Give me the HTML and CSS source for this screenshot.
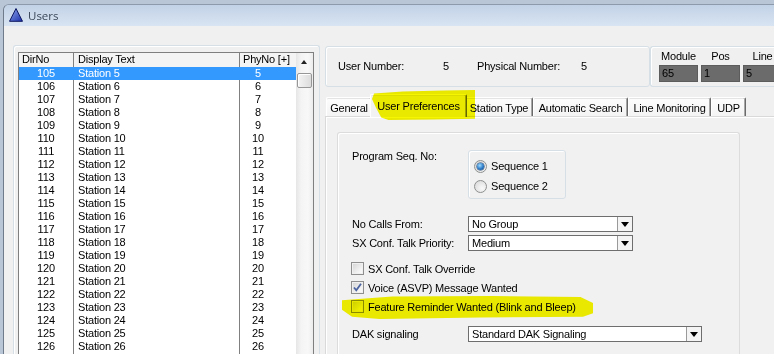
FILE: index.html
```html
<!DOCTYPE html>
<html lang="en">
<head>
    <meta charset="UTF-8">
    <title>Users</title>
    <link rel="stylesheet" href="styles.css">
</head>
<body>
    <div class="window">
        <div class="titlebar">
            <svg class="app-icon" width="14" height="14" viewBox="0 0 14 14">
                <defs>
                    <linearGradient id="tri" x1="0" y1="0" x2="1" y2="1">
                        <stop offset="0" stop-color="#8fa8f0"/>
                        <stop offset="1" stop-color="#1b2fa8"/>
                    </linearGradient>
                </defs>
                <polygon points="7,0.5 13.5,13.3 0.5,13.3" fill="url(#tri)" stroke="#0d1760" stroke-width="1"/>
            </svg>
            <span class="title">Users</span>
        </div>

        <div class="client">
            <div class="list-group">
                <div class="listbox">
                    <div class="list-main">
                        <div class="list-head">
                            <div class="c1">DirNo</div>
                            <div class="c2">Display Text</div>
                            <div class="c3">PhyNo [+]</div>
                        </div>
                        <div class="rows">
                            <div class="row selected"><div class="c1">105</div><div class="c2">Station 5</div><div class="c3">5</div></div>
                            <div class="row"><div class="c1">106</div><div class="c2">Station 6</div><div class="c3">6</div></div>
                            <div class="row"><div class="c1">107</div><div class="c2">Station 7</div><div class="c3">7</div></div>
                            <div class="row"><div class="c1">108</div><div class="c2">Station 8</div><div class="c3">8</div></div>
                            <div class="row"><div class="c1">109</div><div class="c2">Station 9</div><div class="c3">9</div></div>
                            <div class="row"><div class="c1">110</div><div class="c2">Station 10</div><div class="c3">10</div></div>
                            <div class="row"><div class="c1">111</div><div class="c2">Station 11</div><div class="c3">11</div></div>
                            <div class="row"><div class="c1">112</div><div class="c2">Station 12</div><div class="c3">12</div></div>
                            <div class="row"><div class="c1">113</div><div class="c2">Station 13</div><div class="c3">13</div></div>
                            <div class="row"><div class="c1">114</div><div class="c2">Station 14</div><div class="c3">14</div></div>
                            <div class="row"><div class="c1">115</div><div class="c2">Station 15</div><div class="c3">15</div></div>
                            <div class="row"><div class="c1">116</div><div class="c2">Station 16</div><div class="c3">16</div></div>
                            <div class="row"><div class="c1">117</div><div class="c2">Station 17</div><div class="c3">17</div></div>
                            <div class="row"><div class="c1">118</div><div class="c2">Station 18</div><div class="c3">18</div></div>
                            <div class="row"><div class="c1">119</div><div class="c2">Station 19</div><div class="c3">19</div></div>
                            <div class="row"><div class="c1">120</div><div class="c2">Station 20</div><div class="c3">20</div></div>
                            <div class="row"><div class="c1">121</div><div class="c2">Station 21</div><div class="c3">21</div></div>
                            <div class="row"><div class="c1">122</div><div class="c2">Station 22</div><div class="c3">22</div></div>
                            <div class="row"><div class="c1">123</div><div class="c2">Station 23</div><div class="c3">23</div></div>
                            <div class="row"><div class="c1">124</div><div class="c2">Station 24</div><div class="c3">24</div></div>
                            <div class="row"><div class="c1">125</div><div class="c2">Station 25</div><div class="c3">25</div></div>
                            <div class="row"><div class="c1">126</div><div class="c2">Station 26</div><div class="c3">26</div></div>
                            <div class="row empty"><div class="c1"></div><div class="c2"></div><div class="c3"></div></div>
                        </div>
                    </div>
                    <div class="scrollbar">
                        <div class="sb-up"></div>
                        <div class="sb-thumb"></div>
                    </div>
                </div>
            </div>

            <div class="right">
                <div class="info-row">
                    <div class="info-panel">
                        <span class="info-label">User Number:</span>
                        <span class="info-value">5</span>
                        <span class="info-label wide">Physical Number:</span>
                        <span class="info-value">5</span>
                    </div>
                    <div class="module-panel">
                        <div class="mod-col">
                            <div class="mod-label">Module</div>
                            <div class="mod-box">65</div>
                        </div>
                        <div class="mod-col">
                            <div class="mod-label">Pos</div>
                            <div class="mod-box">1</div>
                        </div>
                        <div class="mod-col">
                            <div class="mod-label">Line</div>
                            <div class="mod-box">5</div>
                        </div>
                    </div>
                </div>

                <div class="tabs">
                    <div class="tab tab-general">General</div>
                    <div class="tab tab-prefs active marked">User Preferences</div>
                    <div class="tab tab-station">Station Type</div>
                    <div class="tab tab-search">Automatic Search</div>
                    <div class="tab tab-monitor">Line Monitoring</div>
                    <div class="tab tab-udp">UDP</div>
                </div>

                <div class="tab-page">
                    <div class="groupbox">
                        <div class="form-row top">
                            <div class="form-label">Program Seq. No:</div>
                            <div class="radio-box">
                                <div class="radio-row"><span class="radio checked"></span>Sequence 1</div>
                                <div class="radio-row"><span class="radio"></span>Sequence 2</div>
                            </div>
                        </div>

                        <div class="form-row select-row first">
                            <div class="form-label">No Calls From:</div>
                            <div class="combo"><span class="combo-text">No Group</span><span class="combo-btn"></span></div>
                        </div>
                        <div class="form-row select-row">
                            <div class="form-label">SX Conf. Talk Priority:</div>
                            <div class="combo"><span class="combo-text">Medium</span><span class="combo-btn"></span></div>
                        </div>

                        <div class="checks">
                            <div class="check-row"><span class="checkbox"></span>SX Conf. Talk Override</div>
                            <div class="check-row">
                                <span class="checkbox">
                                    <svg width="11" height="11" viewBox="0 0 11 11"><path d="M2 5.5 L4.3 8.3 L9 1.8" fill="none" stroke="#4c64a0" stroke-width="1.8"/></svg>
                                </span>Voice (ASVP) Message Wanted
                            </div>
                            <div class="check-row marked"><span class="checkbox"></span>Feature Reminder Wanted (Blink and Bleep)</div>
                        </div>

                        <div class="form-row select-row dak">
                            <div class="form-label">DAK signaling</div>
                            <div class="combo long"><span class="combo-text">Standard DAK Signaling</span><span class="combo-btn"></span></div>
                        </div>
                    </div>
                </div>
            </div>
        </div>
    </div>
</body>
</html>
```

FILE: styles.css
```css
* {
    margin: 0;
    padding: 0;
    box-sizing: border-box;
}

body {
    width: 774px;
    height: 354px;
    overflow: hidden;
    background: #b9c6d6;
    font-family: "Liberation Sans", Arial, sans-serif;
    font-size: 11px;
    letter-spacing: -0.2px;
    color: #000;
}

.window {
    margin: 4px 0 0 3px;
    height: 350px;
    border-left: 1px solid #6f7b8b;
    border-top: 1px solid #8d9aab;
    border-top-left-radius: 6px;
    display: flex;
    flex-direction: column;
    overflow: hidden;
}

/* title bar */
.titlebar {
    height: 21px;
    flex-shrink: 0;
    background: linear-gradient(#c2d2e6, #d8e4f2);
    display: flex;
    align-items: center;
    gap: 5px;
    padding: 0 0 1px 5px;
}

.title {
    font-family: "Open Sans", "Liberation Sans", sans-serif;
    font-size: 11.5px;
    letter-spacing: 0;
    color: #3a475a;
}

.client {
    flex: 1;
    background: #f0f0f0;
    display: flex;
    align-items: flex-start;
}

/* left list */
.list-group {
    margin: 19px 0 0 9px;
    width: 307px;
    height: 340px;
    border: 1px solid #d5dfe5;
    border-bottom: none;
    border-radius: 3px 3px 0 0;
    box-shadow: inset 1px 1px 0 #fff;
    padding: 6px 5px 0 4px;
}

.listbox {
    display: flex;
    height: 330px;
    background: #fff;
    border: 1px solid #7f7f7f;
    border-bottom: none;
}

.list-main {
    width: 277px;
}

.list-head {
    display: flex;
    height: 14px;
    line-height: 13px;
    background: #f4f4f4;
}

.list-head > div {
    padding-left: 3px;
}

.list-head .c2 {
    padding-left: 4px;
}

.c1 {
    width: 55px;
    border-right: 1px solid #808080;
}

.c2 {
    width: 166px;
    border-right: 1px solid #808080;
}

.c3 {
    width: 56px;
}

.row {
    display: flex;
    height: 13px;
    line-height: 13px;
}

.row .c1 {
    text-align: center;
}

.row .c2 {
    padding-left: 4px;
}

.row .c3 {
    text-align: center;
    padding-right: 20px;
}

.row.selected {
    background: #3399ff;
    color: #fff;
}

.row.selected .c1,
.row.selected .c2 {
    border-right-color: #3399ff;
}

.scrollbar {
    width: 17px;
    background: linear-gradient(90deg, #e6e6e6, #f4f4f4 30%, #f8f8f8 70%, #ececec);
    display: flex;
    flex-direction: column;
    align-items: center;
}

.sb-up {
    width: 100%;
    height: 20px;
    position: relative;
}

.sb-up::after {
    content: '';
    position: absolute;
    left: 5px;
    top: 7px;
    border-left: 3.5px solid transparent;
    border-right: 3.5px solid transparent;
    border-bottom: 4px solid #222;
}

.sb-thumb {
    width: 15px;
    height: 15px;
    border: 1px solid #979797;
    border-radius: 2px;
    background: linear-gradient(90deg, #f4f4f4, #e8e8e8 50%, #dcdcdc);
    box-shadow: inset 1px 1px 0 #fff;
}

/* right side */
.right {
    flex: 1;
    margin: 20px 0 0 5px;
    display: flex;
    flex-direction: column;
    height: 328px;
}

.info-row {
    display: flex;
    height: 41px;
}

.info-panel {
    width: 325px;
    border: 1px solid #d5dfe5;
    border-radius: 3px;
    box-shadow: inset 1px 1px 0 #fff;
    display: flex;
    align-items: center;
    padding: 0 0 1px 12px;
}

.info-label {
    width: 105px;
}

.info-label.wide {
    width: 104px;
}

.info-value {
    width: 34px;
}

.module-panel {
    flex: 1;
    border: 1px solid #d5dfe5;
    border-right: none;
    border-radius: 3px 0 0 3px;
    box-shadow: inset 1px 1px 0 #fff;
    display: flex;
    gap: 3px;
    padding: 3px 0 0 8px;
}

.mod-col {
    width: 39px;
    flex-shrink: 0;
}

.mod-label {
    text-align: center;
    line-height: 13px;
    height: 15px;
}

.mod-box {
    height: 17px;
    background: #6b6b6b;
    border: 1px solid #5c5c5c;
    padding-left: 2px;
    line-height: 15px;
}

/* tabs */
.tabs {
    margin-top: 6px;
    height: 23px;
    display: flex;
    align-items: flex-end;
    padding-left: 1px;
}

.tab {
    height: 19px;
    padding-top: 2px;
    display: flex;
    align-items: center;
    justify-content: center;
    flex-shrink: 0;
    background: linear-gradient(#fdfdfd, #f4f4f4);
    border: 1px solid #fff;
    border-bottom: none;
    border-right-color: #6a6a6a;
    box-shadow: inset -1px 0 0 #a8a8a8, inset 0 1px 0 #e4e4e4;
    border-radius: 2px 2px 0 0;
}

.tab-general { width: 46px; }
.tab-prefs { width: 93px; }
.tab-station { width: 68px; }
.tab-search { width: 95px; }
.tab-monitor { width: 83px; }
.tab-udp { width: 35px; }

.tab.active {
    position: relative;
    width: 97px;
    height: 23px;
    margin: 0 -2px -1px;
    padding-top: 0;
    background: #f2f2f2;
}

.tab-page {
    flex: 1;
    border: 1px solid #d9d9d9;
    border-right: none;
    border-bottom: none;
    box-shadow: inset 1px 1px 0 #fff;
    background: #f1f1f1;
    padding: 15px 0 0 11px;
}

.groupbox {
    width: 403px;
    height: 230px;
    border: 1px solid #dcdcdc;
    border-bottom: none;
    border-radius: 3px 3px 0 0;
    box-shadow: inset 1px 1px 0 #fff;
    padding: 17px 0 0 14px;
}

.form-row {
    display: flex;
    align-items: center;
}

.form-row.top {
    align-items: flex-start;
}

.form-label {
    width: 116px;
    flex-shrink: 0;
    line-height: 13px;
}

.radio-box {
    width: 98px;
    height: 49px;
    border: 1px solid #d5dfe5;
    border-radius: 3px;
    box-shadow: inset 1px 1px 0 #fff;
    padding: 5px 0 0 5px;
}

.radio-row {
    height: 20px;
    display: flex;
    align-items: center;
    gap: 4px;
}

.radio {
    width: 13px;
    height: 13px;
    border-radius: 50%;
    border: 1px solid #8e8f8f;
    background: radial-gradient(circle at 65% 65%, #fafafa, #dcdcdc 80%);
    display: flex;
    align-items: center;
    justify-content: center;
}

.radio.checked::after {
    content: '';
    width: 7px;
    height: 7px;
    border-radius: 50%;
    background: radial-gradient(circle at 40% 35%, #9fdcff, #2c7ac6 55%, #11407a);
    box-shadow: 0 0 0 0.5px #1b3f6b;
}

.select-row {
    height: 16px;
    margin-top: 3px;
}

.select-row.first {
    margin-top: 17px;
}

.combo {
    width: 165px;
    height: 16px;
    border: 1px solid #6e6e6e;
    background: #fff;
    display: flex;
}

.combo.long {
    width: 234px;
}

.combo-text {
    flex: 1;
    padding-left: 3px;
    line-height: 14px;
}

.combo-btn {
    width: 15px;
    border-left: 1px solid #9a9a9a;
    background: #f4f4f4;
    display: flex;
    align-items: center;
    justify-content: center;
}

.combo-btn::after {
    content: '';
    border-left: 4px solid transparent;
    border-right: 4px solid transparent;
    border-top: 5px solid #000;
}

.checks {
    margin: 8px 0 0 -1px;
}

.check-row {
    height: 19px;
    display: flex;
    align-items: center;
    gap: 4px;
}

.checkbox {
    width: 13px;
    height: 13px;
    border: 1px solid #8f8f8f;
    background: linear-gradient(135deg, #d2d2d2, #f4f4f4 70%, #fdfdfd);
    box-shadow: inset 0 0 0 1px #f0f0f0;
    display: flex;
    align-items: center;
    justify-content: center;
}

.select-row.dak {
    margin-top: 10px;
}

/* yellow marker strokes */
.marked {
    position: relative;
}

.marked::before {
    content: '';
    position: absolute;
    background: #f6f600;
    mix-blend-mode: multiply;
    pointer-events: none;
}

.tab.marked::before {
    left: 1px;
    top: -5px;
    width: 103px;
    height: 30px;
    clip-path: polygon(2% 12%, 30% 5%, 70% 2%, 100% 0, 100% 96%, 60% 98%, 16% 100%, 9% 92%, 4% 60%, 0 30%);
}

.check-row.marked::before {
    left: -9px;
    top: -1px;
    width: 251px;
    height: 23px;
    clip-path: polygon(0 18%, 20% 2%, 60% 0, 95% 4%, 100% 30%, 100% 75%, 96% 90%, 55% 94%, 15% 100%, 4% 90%, 0 60%);
}
```
